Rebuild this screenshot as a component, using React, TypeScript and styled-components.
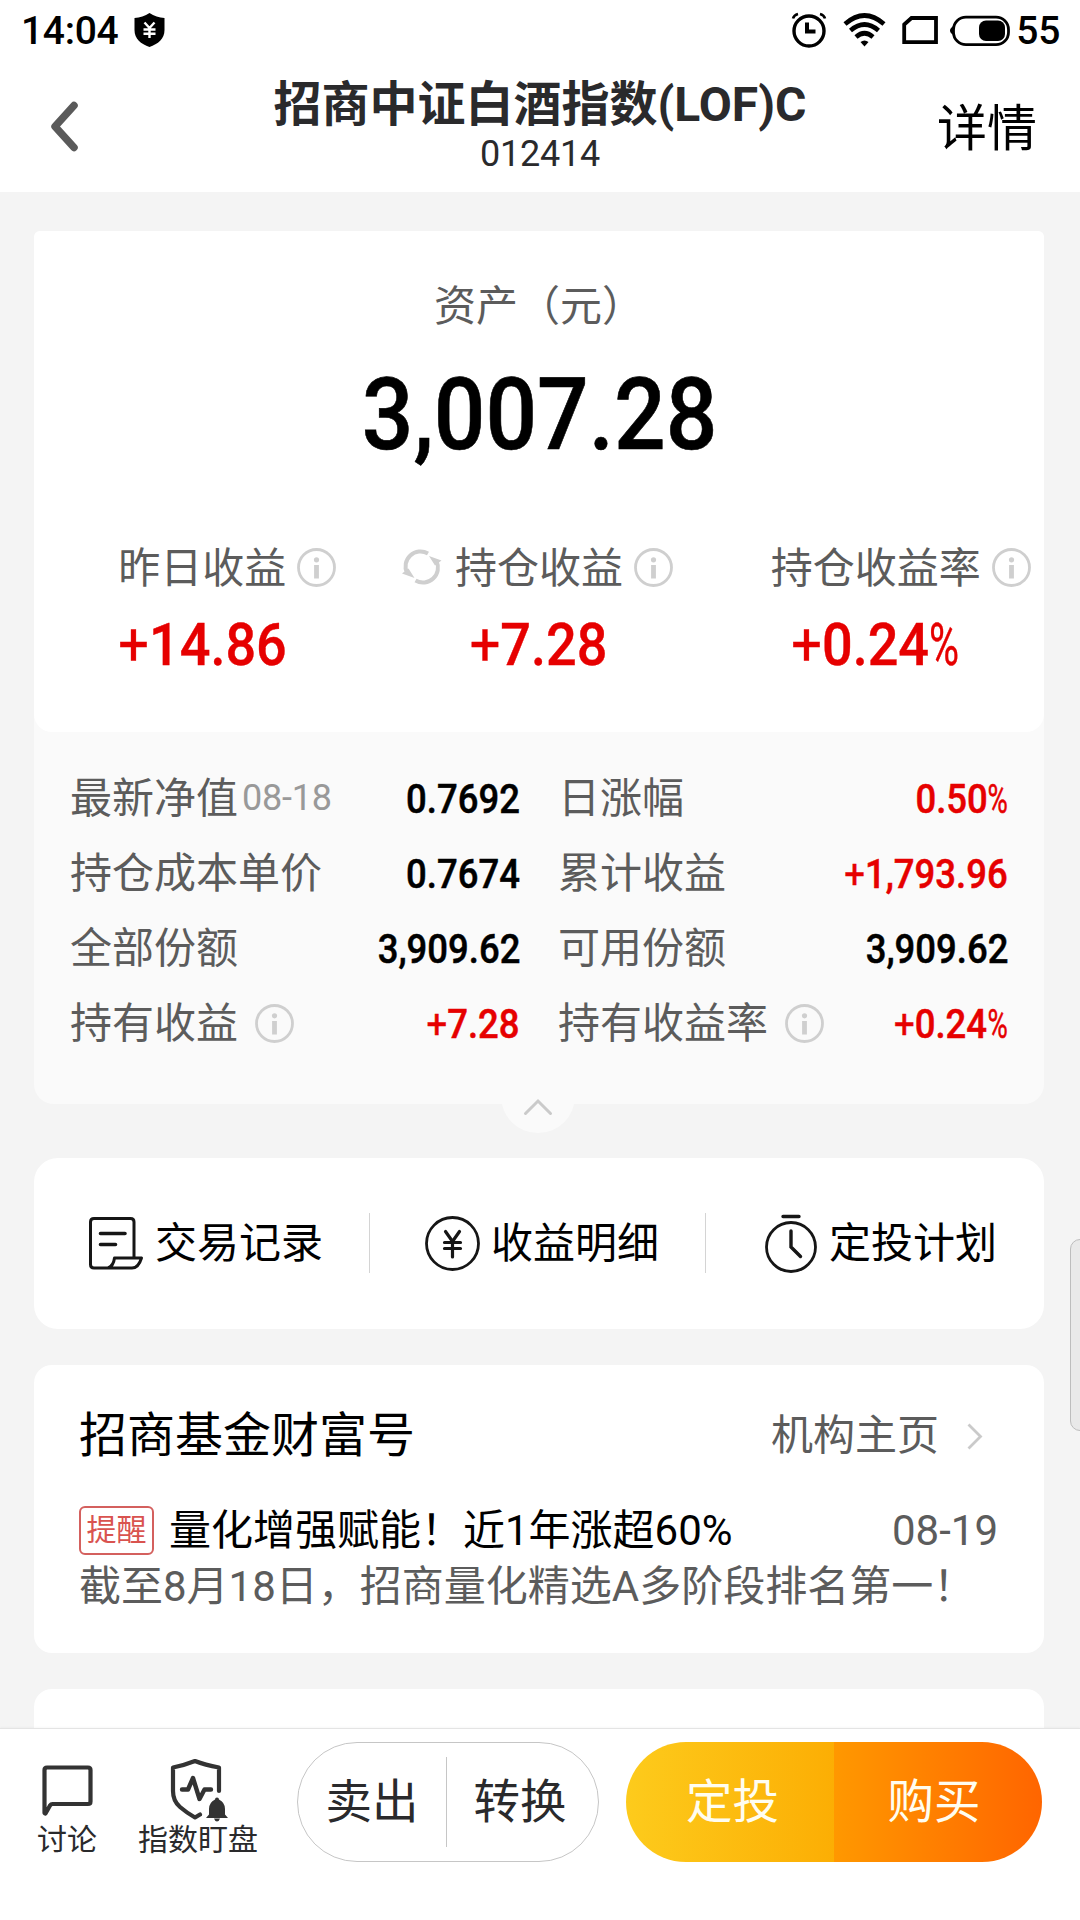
import React from 'react';
import styled, { createGlobalStyle } from 'styled-components';

const Global = createGlobalStyle`
  *, *::before, *::after { box-sizing: border-box; }
  body {
    margin: 0;
    background: #f4f4f4;
    color: #000;
    font-family: Roboto, "Noto Sans CJK SC", sans-serif;
    overflow: hidden;
  }
  svg { display: block; flex: none; overflow: visible; }
`;

const Page = styled.div`
  width: 1080px;
  height: 1920px;
  display: flex;
  flex-direction: column;
  overflow: hidden;
  position: relative;
`;

const StatusBar = styled.div`
  height: 60px;
  flex: none;
  background: #fff;
  display: flex;
  align-items: center;
  justify-content: space-between;
  padding: 0 20px 0 21px;
  font-size: 39px;
  font-weight: 500;
  line-height: 60px;
`;

const StatusGroup = styled.div`
  display: flex;
  align-items: center;
  gap: ${(p: { $gap: number }) => p.$gap}px;
`;

const StatusText = styled.span`
  padding-top: 1px;
  letter-spacing: -0.3px;
`;

const Header = styled.header`
  height: 132px;
  flex: none;
  background: #fff;
  display: grid;
  grid-template-columns: 200px 1fr 200px;
  align-items: center;
`;

const Back = styled.div`
  padding: 1px 0 0 50px;
`;

const TitleBlock = styled.div`
  text-align: center;
  color: #2a2a2c;
  white-space: nowrap;
  align-self: start;
  padding-top: 16px;
`;

const Title = styled.h1`
  margin: 0;
  font-size: 48px;
  font-weight: 700;
  line-height: 58px;
`;

const Code = styled.div`
  font-size: 36px;
  letter-spacing: -0.2px;
  line-height: 40px;
`;

const DetailLink = styled.div`
  font-size: 50px;
  line-height: 60px;
  text-align: right;
  padding: 5px 43px 0 0;
`;

const Content = styled.main`
  flex: 1;
  min-height: 0;
  overflow: hidden;
  padding: 39px 36px 0 34px;
  display: flex;
  flex-direction: column;
`;

const AssetCard = styled.section`
  flex: none;
  height: 873px;
  background: #fafafa;
  border-radius: 6px 6px 20px 20px;
  position: relative;
`;

const AssetTop = styled.div`
  height: 501px;
  background: #fff;
  border-radius: 6px 6px 18px 18px;
  display: flex;
  flex-direction: column;
  align-items: center;
`;

const AssetLabel = styled.div`
  padding-top: 49px;
  font-size: 42px;
  line-height: 54px;
  color: #5c5c5c;
`;

const Num = styled.span<{ $size: number; $scale: number; $origin?: string; $red?: boolean; $stroke?: number }>`
  display: inline-block;
  white-space: nowrap;
  font-weight: 500;
  font-size: ${(p) => p.$size}px;
  color: ${(p) => (p.$red ? '#e60000' : '#000')};
  -webkit-text-stroke: ${(p) => p.$stroke ?? 0}px currentColor;
  transform: scaleX(${(p) => p.$scale});
  transform-origin: ${(p) => p.$origin ?? 'center'} center;
`;

const Plus = styled.span`
  font-weight: 400;
`;

const Percent = styled.span`
  display: inline-block;
  font-weight: 400;
  transform: scaleX(0.76);
  transform-origin: left center;
  margin-right: -0.17em;
`;

const AssetValue = styled.div`
  height: 120px;
  margin-top: 21px;
  line-height: 120px;
  padding-left: 1px;
`;

const Gains = styled.div`
  align-self: stretch;
  display: grid;
  grid-template-columns: repeat(3, 1fr);
  margin-top: 63px;
`;

const Gain = styled.div`
  display: flex;
  flex-direction: column;
  align-items: center;
`;

const GainLabel = styled.div`
  align-self: stretch;
  display: grid;
  grid-template-columns: 1fr auto 1fr;
  align-items: center;
  font-size: 42px;
  line-height: 54px;
  color: #5c5c5c;
`;

const GainName = styled.span`
  padding-top: 4px;
`;

const GainSide = styled.div<{ $left?: boolean }>`
  display: flex;
  justify-content: ${(p) => (p.$left ? 'flex-end' : 'flex-start')};
  padding: ${(p) => (p.$left ? '0 14px 0 0' : '0 0 0 11px')};
`;

const GainValue = styled.div`
  margin-top: 16px;
  height: 66px;
  line-height: 66px;
`;

const Details = styled.div`
  display: grid;
  grid-template-columns: 450px 450px;
  column-gap: 38px;
  grid-auto-rows: 75px;
  padding: 29px 36px 0;
`;

const DetailRow = styled.div`
  display: flex;
  align-items: center;
  justify-content: space-between;
  line-height: 75px;
`;

const DetailLabel = styled.div`
  display: flex;
  align-items: center;
  font-size: 42px;
  color: #5c5c5c;
  white-space: nowrap;
  gap: 17px;
`;

const DetailName = styled.span`
  padding-top: 1px;
  line-height: 54px;
`;

const DetailValue = styled.div`
  padding-top: 10px;
  line-height: 72px;
`;

const DateNote = styled.span`
  margin-left: -13px;
  font-size: 36px;
  letter-spacing: -0.2px;
  color: #999;
`;

const Collapse = styled.div`
  position: absolute;
  left: 467px;
  top: 828px;
  width: 74px;
  height: 74px;
  border-radius: 50%;
  background: #fafafa;
  display: flex;
  justify-content: center;
  padding-top: 40px;
`;

const Actions = styled.section`
  flex: none;
  margin-top: 54px;
  height: 171px;
  border-radius: 24px;
  background: #fff;
  display: flex;
  align-items: center;
  padding-bottom: 1px;
`;

const Action = styled.div<{ $pad: number; $gap: number }>`
  flex: none;
  width: 335px;
  display: flex;
  align-items: center;
  gap: ${(p) => p.$gap}px;
  padding-left: ${(p) => p.$pad}px;
  font-size: 42px;
  line-height: 54px;
  white-space: nowrap;
`;

const ActionName = styled.span`
  padding-top: 2px;
`;

const ActionRule = styled.div`
  width: 1px;
  height: 60px;
  background: #d4d4d4;
`;

const Feed = styled.section`
  flex: none;
  margin-top: 36px;
  height: 288px;
  border-radius: 18px;
  background: #fff;
  padding: 42px 46px 0 45px;
`;

const FeedHead = styled.div`
  display: flex;
  justify-content: space-between;
  align-items: center;
  line-height: 58px;
`;

const FeedTitle = styled.h2`
  margin: 0;
  font-size: 48px;
  font-weight: 400;
`;

const FeedMore = styled.div`
  display: flex;
  align-items: center;
  font-size: 42px;
  color: #5c5c5c;
  gap: 28px;
  padding-right: 16px;
`;

const Post = styled.div`
  display: flex;
  align-items: center;
  margin-top: 38px;
  height: 54px;
  font-size: 42px;
  line-height: 54px;
  white-space: nowrap;
`;

const PostTitle = styled.span`
  padding-top: 2px;
`;

const Tag = styled.span`
  width: 75px;
  height: 49px;
  margin: 0 15px 0 0;
  border: 2px solid #d4605e;
  border-radius: 6px;
  color: #d9534f;
  font-size: 30px;
  line-height: 43px;
  text-align: center;
`;

const PostDate = styled.span`
  margin-left: auto;
  padding-top: 2px;
  color: #5c5c5c;
`;

const PostText = styled.div`
  margin-top: 3px;
  font-size: 42px;
  line-height: 54px;
  color: #5c5c5c;
  white-space: nowrap;
`;

const NextCard = styled.section`
  flex: none;
  margin-top: 36px;
  height: 120px;
  border-radius: 18px;
  background: #fff;
`;

const BottomBar = styled.footer`
  flex: none;
  height: 192px;
  background: #fff;
  border-top: 1px solid #e4e4e4;
  box-shadow: 0 -1px 2px rgba(0, 0, 0, 0.03);
  display: flex;
  align-items: flex-start;
  position: relative;
`;

const Tool = styled.div<{ $left: number; $top: number }>`
  flex: none;
  display: flex;
  flex-direction: column;
  align-items: center;
  margin-left: ${(p) => p.$left}px;
  padding-top: ${(p) => p.$top}px;
  color: #2a2a2c;
  font-size: 30px;
  line-height: 36px;
  height: 129px;
`;

const ToolText = styled.span`
  margin-top: auto;
  white-space: nowrap;
`;

const Pill = styled.div`
  flex: none;
  margin: 13px 0 0 39px;
  width: 302px;
  height: 120px;
  border: 1.5px solid #c6c6c6;
  border-radius: 60px;
  display: flex;
  align-items: center;
  color: #2a2a2c;
  font-size: 46.5px;
  line-height: 60px;
`;

const PillHalf = styled.div<{ $width: number; $pad: string }>`
  flex: none;
  width: ${(p) => p.$width}px;
  text-align: center;
  padding: ${(p) => p.$pad};
`;

const PillRule = styled.div`
  width: 1px;
  height: 90px;
  background: #c6c6c6;
`;

const Trade = styled.div`
  flex: none;
  margin: 13px 0 0 27px;
  width: 416px;
  height: 120px;
  border-radius: 60px;
  overflow: hidden;
  display: flex;
  color: #fffdf0;
  font-size: 46.5px;
  line-height: 120px;
`;

const TradeHalf = styled.div<{ $from: string; $to: string; $pad: string }>`
  flex: none;
  width: 50%;
  text-align: center;
  padding: ${(p) => p.$pad};
  background: linear-gradient(90deg, ${(p) => p.$from}, ${(p) => p.$to});
`;

const EdgeHandle = styled.div`
  position: absolute;
  left: 1070px;
  top: 1239px;
  width: 20px;
  height: 192px;
  border: 1.5px solid #bdbdbd;
  border-radius: 10px;
  background: #e9e9e9;
`;

const InfoIcon = () => (
  <svg width="39" height="39" viewBox="0 0 39 39" fill="none">
    <circle cx="19.5" cy="19.5" r="18" stroke="#cfcfcf" strokeWidth="2.8" />
    <circle cx="19.5" cy="11.8" r="2.6" fill="#cfcfcf" />
    <path d="M19.5 17v13.5" stroke="#cfcfcf" strokeWidth="4.8" />
  </svg>
);

const RefreshIcon = () => (
  <svg width="39" height="34" viewBox="0 0 39 34" fill="none">
    <g stroke="#cfcfcf" strokeWidth="4">
      <path d="M5 23A15 15 0 0 1 26 3.500" />
      <path d="M34.500 11A15 15 0 0 1 13.500 30.500" />
    </g>
    <path d="M27 6L39.500 10.500L33 15.500Z M12.500 28L0 23.500L6.500 18.500Z" fill="#cfcfcf" />
  </svg>
);

const detailRows = [
  { label: '最新净值', note: '08-18', value: '0.7692' },
  { label: '日涨幅', value: '0.50%', red: true },
  { label: '持仓成本单价', value: '0.7674' },
  { label: '累计收益', value: '+1,793.96', red: true },
  { label: '全部份额', value: '3,909.62' },
  { label: '可用份额', value: '3,909.62' },
  { label: '持有收益', info: true, value: '+7.28', red: true },
  { label: '持有收益率', info: true, value: '+0.24%', red: true },
];

const gains = [
  { label: '昨日收益', value: '+14.86' },
  { label: '持仓收益', value: '+7.28', refresh: true },
  { label: '持仓收益率', value: '+0.24%' },
];

const Figure = ({ text }: { text: string }) => {
  const signed = text.startsWith('+');
  const percent = text.endsWith('%');
  return (
    <>
      {signed && <Plus>+</Plus>}
      {text.replace(/[+%]/g, '')}
      {percent && <Percent>%</Percent>}
    </>
  );
};

export default function App() {
  return (
    <Page>
      <Global />
      <StatusBar>
        <StatusGroup $gap={16}>
          <StatusText>14:04</StatusText>
          <svg width="31" height="34" viewBox="0 0 31 34">
            <path d="M15.500 0C11 3 6 4.500 0.500 5V17C0.500 26 7 31 15.500 34C24 31 30.500 26 30.500 17V5C25 4.500 20 3 15.500 0Z" />
            <path d="M10.500 9.500L15.500 15L20.500 9.500M15.500 15V25M9.500 16.500H21.500M9.500 20.800H21.500" stroke="#fff" strokeWidth="2.4" fill="none" />
          </svg>
        </StatusGroup>
        <StatusGroup $gap={4}>
          <svg width="220" height="34" viewBox="0 0 220 34" fill="none" stroke="#000">
            <circle cx="17" cy="18" r="15" strokeWidth="3.4" />
            <path d="M15 9.500V18.500H23.500" strokeWidth="4" />
            <path d="M1 5.500Q2 2 6 1M33 5.500Q32 2 28 1" strokeWidth="2.6" />
            <path d="M53 11Q72.500 -6 92 11" strokeWidth="4.600" />
            <path d="M58.500 17.500Q72.500 5.500 86.500 17.500" strokeWidth="4.600" />
            <path d="M64 24Q72.500 16.500 81 24" strokeWidth="4.600" />
            <path d="M68.500 29Q72.500 26 76.500 29L72.500 33.500Z" fill="#000" stroke="none" />
            <path d="M112.200 11.500L119.500 5H144V29.200H112.200Z" strokeWidth="3.800" />
            <rect x="161.500" y="4.200" width="55" height="27.500" rx="12.500" strokeWidth="2.800" />
            <rect x="187" y="7.500" width="26" height="20.500" rx="7" fill="#000" stroke="none" />
            <path d="M161.500 13Q158 15 158 17.500Q158 20 161.500 22Z" fill="#000" stroke="none" />
          </svg>
          <StatusText>55</StatusText>
        </StatusGroup>
      </StatusBar>

      <Header>
        <Back>
          <svg width="28" height="51" viewBox="0 0 28 51" fill="none">
            <path d="M24 4.500L5 25.500L24 46.500" stroke="#5a5a5a" strokeWidth="7.500" strokeLinecap="round" strokeLinejoin="round" />
          </svg>
        </Back>
        <TitleBlock>
          <Title>招商中证白酒指数(LOF)C</Title>
          <Code>012414</Code>
        </TitleBlock>
        <DetailLink>详情</DetailLink>
      </Header>

      <Content>
        <AssetCard>
          <AssetTop>
            <AssetLabel>资产（元）</AssetLabel>
            <AssetValue>
              <Num $size={101} $scale={0.9} $stroke={0.6}>3,007.28</Num>
            </AssetValue>
            <Gains>
              {gains.map((g) => (
                <Gain key={g.label}>
                  <GainLabel>
                    <GainSide $left>{g.refresh && <RefreshIcon />}</GainSide>
                    <GainName>{g.label}</GainName>
                    <GainSide>
                      <InfoIcon />
                    </GainSide>
                  </GainLabel>
                  <GainValue>
                    <Num $size={60} $scale={0.9} $red $stroke={0.4}>
                      <Figure text={g.value} />
                    </Num>
                  </GainValue>
                </Gain>
              ))}
            </Gains>
          </AssetTop>
          <Details>
            {detailRows.map((r) => (
              <DetailRow key={r.label}>
                <DetailLabel>
                  <DetailName>{r.label}</DetailName>
                  {r.note && <DateNote>{r.note}</DateNote>}
                  {r.info && <InfoIcon />}
                </DetailLabel>
                <DetailValue>
                  <Num $size={41} $scale={0.89} $origin="right" $red={r.red} $stroke={0.5}>
                    <Figure text={r.value} />
                  </Num>
                </DetailValue>
              </DetailRow>
            ))}
          </Details>
          <Collapse>
            <svg width="28" height="16" viewBox="0 0 28 16" fill="none">
              <path d="M1.500 14.500L14 2L26.500 14.500" stroke="#cacaca" strokeWidth="3" strokeLinecap="round" />
            </svg>
          </Collapse>
        </AssetCard>

        <Actions>
          <Action $pad={55} $gap={12}>
            <svg width="54" height="53" viewBox="0 0 54 53" fill="none" stroke="#161616" strokeWidth="3" strokeLinejoin="round" strokeLinecap="round">
              <path d="M45 41V5Q45 1.500 41.500 1.500H5Q1.500 1.500 1.500 5V47.500Q1.500 51 5 51H43Q49.500 51 52.500 41H25.500Q24.500 49 19 51" />
              <path d="M11.500 16.500H36M11.500 27.500H26.500" strokeWidth="3.600" />
            </svg>
            <ActionName>交易记录</ActionName>
          </Action>
          <ActionRule />
          <Action $pad={55} $gap={11}>
            <svg width="55" height="55" viewBox="0 0 55 55" fill="none" stroke="#161616" strokeWidth="2.800" strokeLinecap="round">
              <circle cx="27.500" cy="27.500" r="26" />
              <path d="M20.500 15.500L27.500 25.500L34.500 15.500M27.500 25.500V41M19.500 26.500H35.500M19.500 32.500H35.500" strokeWidth="3.200" />
            </svg>
            <ActionName>收益明细</ActionName>
          </Action>
          <ActionRule />
          <Action $pad={59} $gap={12}>
            <svg width="52" height="60" viewBox="0 0 52 60" fill="none" stroke="#161616" strokeWidth="2.800" strokeLinecap="round">
              <circle cx="26" cy="34" r="24.500" />
              <path d="M18 3.500H34M26 18V34L35.500 43.500" strokeWidth="3.400" />
            </svg>
            <ActionName>定投计划</ActionName>
          </Action>
        </Actions>

        <Feed>
          <FeedHead>
            <FeedTitle>招商基金财富号</FeedTitle>
            <FeedMore>
              机构主页
              <svg width="15" height="27" viewBox="0 0 15 27" fill="none">
                <path d="M1.500 1.500L13.500 13.500L1.500 25.500" stroke="#cacaca" strokeWidth="2.800" />
              </svg>
            </FeedMore>
          </FeedHead>
          <Post>
            <Tag>提醒</Tag>
            <PostTitle>量化增强赋能！近1年涨超60%</PostTitle>
            <PostDate>08-19</PostDate>
          </Post>
          <PostText>截至8月18日，招商量化精选A多阶段排名第一！</PostText>
        </Feed>

        <NextCard />
      </Content>

      <BottomBar>
        <Tool $left={37} $top={36}>
          <svg width="51" height="52" viewBox="0 0 51 52" fill="none">
            <path d="M2.500 48V5Q2.500 2.500 5 2.500H46Q48.500 2.500 48.500 5V36.500Q48.500 39 46 39H10.500Q9 39 8 40.500L3.500 48.500Z" stroke="#333" strokeWidth="4.200" strokeLinejoin="round" />
          </svg>
          <ToolText>讨论</ToolText>
        </Tool>
        <Tool $left={41} $top={30}>
          <svg width="59" height="62" viewBox="0 0 59 62" fill="none">
            <path d="M50 32V8.500Q36 6 26 2Q16 6 4 8.500V32Q4 42 11 48Q18 54 26 58.500L31 55.500" stroke="#333" strokeWidth="4.200" strokeLinecap="round" strokeLinejoin="round" />
            <path d="M13 30.500H19L24 19L30.500 40L35.500 30.500H42" stroke="#333" strokeWidth="4.400" strokeLinecap="round" strokeLinejoin="round" />
            <path d="M48 38.500Q50 38.500 50 40.500Q56 43.500 56 50V55.500L59 59H37L40 55.500V50Q40 43.500 46 40.500Q46 38.500 48 38.500ZM45 59.500H51Q50 62.500 48 62.500Q46 62.500 45 59.500Z" fill="#333" />
          </svg>
          <ToolText>指数盯盘</ToolText>
        </Tool>
        <Pill>
          <PillHalf $width={148} $pad="0 0 1px 0">卖出</PillHalf>
          <PillRule />
          <PillHalf $width={150} $pad="0 4px 1px 0">转换</PillHalf>
        </Pill>
        <Trade>
          <TradeHalf $from="#fdcb1c" $to="#fcae04" $pad="0 0 0 5px">定投</TradeHalf>
          <TradeHalf $from="#ff9800" $to="#ff6500" $pad="0 8px 0 0">购买</TradeHalf>
        </Trade>
      </BottomBar>
      <EdgeHandle />
    </Page>
  );
}
